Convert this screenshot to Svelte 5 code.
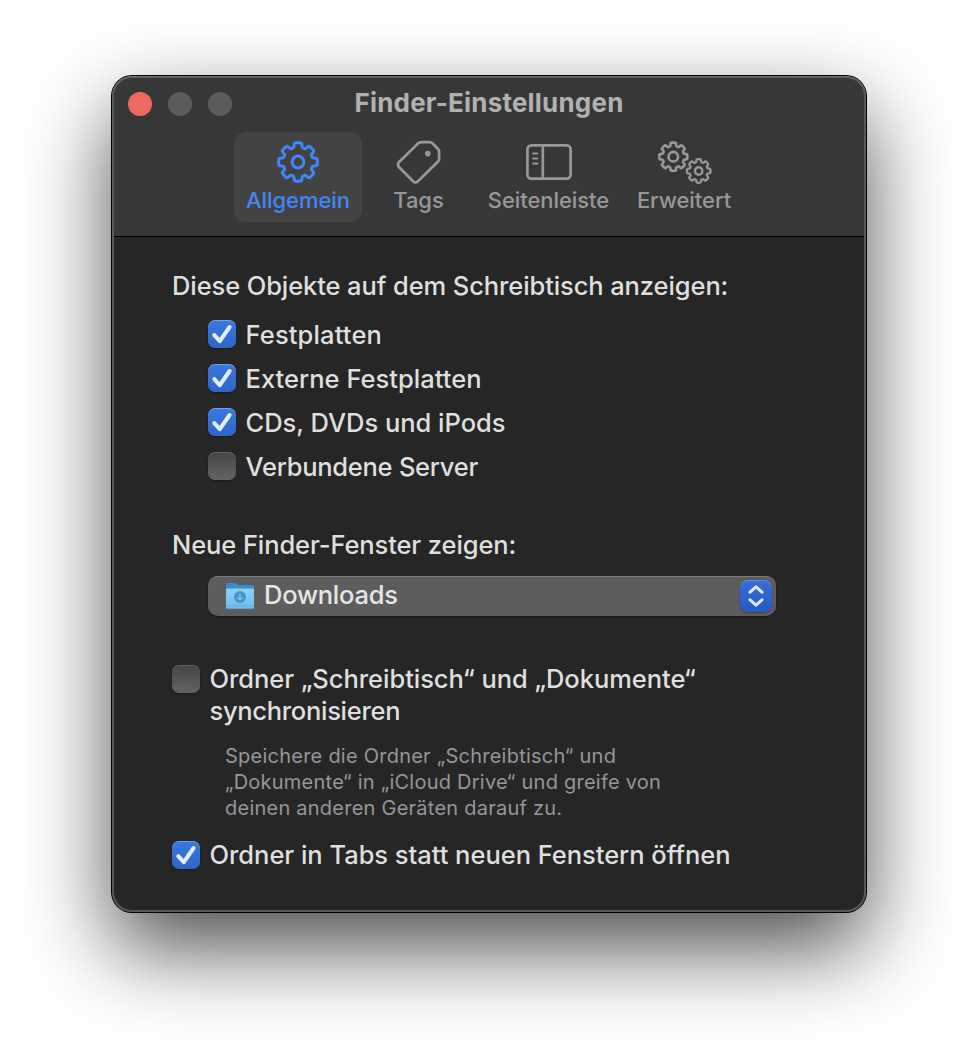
<script lang="ts">
  type Option = { label: string; checked: boolean; tracking: number };

  const tabs = [
    { id: 'general', label: 'Allgemein', width: 128 },
    { id: 'tags', label: 'Tags', width: 111 },
    { id: 'sidebar', label: 'Seitenleiste', width: 149 },
    { id: 'advanced', label: 'Erweitert', width: 122 }
  ];

  let activeTab = $state('general');

  let desktopItems: Option[] = $state([
    { label: 'Festplatten', checked: true, tracking: 0.15 },
    { label: 'Externe Festplatten', checked: true, tracking: 0.02 },
    { label: 'CDs, DVDs und iPods', checked: true, tracking: -0.02 },
    { label: 'Verbundene Server', checked: false, tracking: -0.26 }
  ]);

  let syncFolders = $state(false);
  let openInTabs = $state(true);

  // Closed outline of an eight-toothed gear, corners rounded with quadratic curves
  function gearPath(cx: number, cy: number, r: number): string {
    const inner = r * 0.76;
    const pts: [number, number][] = [];
    for (let i = 0; i < 8; i++) {
      const a = (i * Math.PI) / 4 - Math.PI / 2;
      for (const [rad, off] of [[inner, -0.27], [r, -0.19], [r, 0.19], [inner, 0.27]]) {
        pts.push([cx + rad * Math.cos(a + off), cy + rad * Math.sin(a + off)]);
      }
    }
    const n = pts.length;
    const mix = (p: number[], q: number[], t: number) =>
      `${(p[0] + (q[0] - p[0]) * t).toFixed(2)} ${(p[1] + (q[1] - p[1]) * t).toFixed(2)}`;
    let d = '';
    for (let i = 0; i < n; i++) {
      const prev = pts[(i + n - 1) % n];
      const cur = pts[i];
      const next = pts[(i + 1) % n];
      d += `${i ? 'L' : 'M'}${mix(cur, prev, 0.33)}Q${cur[0].toFixed(2)} ${cur[1].toFixed(2)} ${mix(cur, next, 0.33)}`;
    }
    return d + 'Z';
  }
</script>

{#snippet checkbox(checked: boolean, toggle: () => void, label: string)}
  <button class="checkbox" class:checked role="checkbox" aria-checked={checked} aria-label={label} onclick={toggle}>
    {#if checked}
      <svg viewBox="0 0 28 28" width="28" height="28">
        <path d="M6.3 15.2 L11.8 21.2 L21.6 7" />
      </svg>
    {/if}
  </button>
{/snippet}

<div class="desktop">
  <main class="window">
    <header>
      <div class="titlebar">
        <div class="lights">
          <span class="light close"></span>
          <span class="light"></span>
          <span class="light"></span>
        </div>
        <h1>Finder-Einstellungen</h1>
      </div>

      <nav class="toolbar">
        {#each tabs as tab (tab.id)}
          <button
            class="tab"
            class:active={activeTab === tab.id}
            style="width: {tab.width}px"
            onclick={() => (activeTab = tab.id)}
          >
            {#if tab.id === 'general'}
              <svg viewBox="0 0 46 46" width="46" height="46" stroke-width="3">
                <path d={gearPath(23, 23, 19.7)} />
                <circle cx="23" cy="23" r="5.9" />
              </svg>
            {:else if tab.id === 'tags'}
              <svg viewBox="0 0 46 46" width="46" height="46" stroke-width="2.7">
                <path d="M25.8 3.1H33.6Q35.2 3.1 36.6 4.5L41.6 9.5Q43.1 11 43.1 12.8V19.4Q43.1 21.4 41.5 23L22 42.2Q19.5 44.6 17 42.2L2.9 28Q0.9 25.4 3.1 23L21.8 4.6Q23.4 3.1 25.8 3.1Z" />
                <circle class="solid" cx="31.8" cy="14.6" r="2.8" />
              </svg>
            {:else if tab.id === 'sidebar'}
              <svg viewBox="0 0 46 46" width="46" height="46" stroke-width="2.7">
                <rect x="1.4" y="6.4" width="43.2" height="33.2" rx="4" />
                <path d="M16.8 6.4V39.6" />
                <path d="M7.2 14.4H11.4M7.2 19.4H11.4M7.2 24.4H11.4" stroke-width="2" />
              </svg>
            {:else}
              <svg viewBox="0 0 56 46" width="56" height="46" stroke-width="2.6">
                <path d={gearPath(17.3, 17.7, 14.3)} />
                <circle cx="17.3" cy="17.7" r="4.8" />
                <path d={gearPath(42.7, 32, 12)} stroke-width="2.3" />
                <circle cx="42.7" cy="32" r="3.7" stroke-width="2.4" />
              </svg>
            {/if}
            <span>{tab.label}</span>
          </button>
        {/each}
      </nav>
    </header>

    <section class="content">
      <h2>Diese Objekte auf dem Schreibtisch anzeigen:</h2>
      <div class="options">
        {#each desktopItems as item}
          <div class="option">
            {@render checkbox(item.checked, () => (item.checked = !item.checked), item.label)}
            <span style="letter-spacing: {item.tracking}px">{item.label}</span>
          </div>
        {/each}
      </div>

      <h2 class="second">Neue Finder-Fenster zeigen:</h2>
      <button class="popup">
        <svg class="folder" viewBox="0 0 30 28" width="30" height="28">
          <defs>
            <linearGradient id="folderFront" x1="0" y1="0" x2="0" y2="1">
              <stop offset="0" stop-color="#8ad2fb" />
              <stop offset="1" stop-color="#6fbcf0" />
            </linearGradient>
          </defs>
          <path d="M1 3Q1 1 3 1H9.5Q10.6 1 11.4 1.7L12.4 2.6Q13 3.1 14 3.1H27Q29 3.1 29 5V12H1Z" fill="#3a8cc9" />
          <path d="M1 7.8Q1 6.4 2.4 6.4H27.6Q29 6.4 29 7.8V25.4Q29 27 27.4 27H2.6Q1 27 1 25.4Z" fill="url(#folderFront)" />
          <path d="M1 23.6H29" stroke="#62abdd" stroke-width="0.8" />
          <path d="M1.8 26.6H28.2" stroke="#559fd4" stroke-width="0.8" />
          <circle cx="15" cy="15" r="6" fill="#4795cf" />
          <path d="M15 12V17.6M12.6 15.5L15 17.9L17.4 15.5" fill="none" stroke="#7cc5f3" stroke-width="1.3" />
        </svg>
        <span class="value">Downloads</span>
        <span class="stepper">
          <svg viewBox="0 0 32 32" width="32" height="32">
            <path d="M10 12.2L16 6.9L22 12.2M10 19.8L16 25.1L22 19.8" />
          </svg>
        </span>
      </button>

      <div class="option sync">
        {@render checkbox(syncFolders, () => (syncFolders = !syncFolders), 'Ordner synchronisieren')}
        <span>Ordner „Schreibtisch“ und „Dokumente“<br /><span class="tight">synchronisieren</span></span>
      </div>
      <p class="hint">
        Speichere die Ordner „Schreibtisch“ und<br />
        „Dokumente“ in „iCloud Drive“ und greife von<br />
        deinen anderen Geräten darauf zu.
      </p>
      <div class="option tabs-option">
        {@render checkbox(openInTabs, () => (openInTabs = !openInTabs), 'Ordner in Tabs öffnen')}
        <span>Ordner in Tabs statt neuen Fenstern öffnen</span>
      </div>
    </section>
  </main>
</div>

<style>
  :global(body) {
    margin: 0;
    background: #fff;
  }

  .desktop {
    box-sizing: border-box;
    width: 978px;
    height: 1060px;
    padding: 76px 112px 0;
    overflow: hidden;
    font-family: Inter, 'Liberation Sans', sans-serif;
  }

  .window {
    position: relative;
    display: flex;
    flex-direction: column;
    width: 754px;
    height: 836px;
    border-radius: 20px;
    background: #262626;
    color: #dfdfdf;
    box-shadow:
      0 0 0 1px #000,
      0 36px 86px rgba(0, 0, 0, 0.7);
  }

  /* light rim along the inside edge of the window */
  .window::after {
    content: '';
    position: absolute;
    inset: 0;
    border-radius: 20px;
    box-shadow:
      inset 0 1px 0 rgba(255, 255, 255, 0.16),
      inset 0 0 0 2px #58585a;
    pointer-events: none;
  }

  header {
    height: 160px;
    box-sizing: border-box;
    padding-top: 11px;
    border-radius: 20px 20px 0 0;
    border-bottom: 1px solid #000;
    background: #373737;
    flex: 0 0 161px;
  }

  .titlebar {
    display: grid;
    grid-template-columns: 1fr auto 1fr;
    height: 32px;
  }

  .lights {
    display: flex;
    gap: 16px;
    padding: 5px 0 0 16px;
  }

  .light {
    width: 24px;
    height: 24px;
    border-radius: 50%;
    background: #5b5b5b;
  }

  .light.close {
    background: #ed6a5e;
  }

  h1 {
    margin: 0;
    font-size: 26px;
    font-weight: 700;
    line-height: 32px;
    letter-spacing: 0.2px;
    color: #b1b1b1;
  }

  button {
    margin: 0;
    padding: 0;
    border: none;
    font-family: inherit;
    color: inherit;
  }

  .toolbar {
    display: flex;
    margin: 13px 0 0 122px;
  }

  .tab {
    display: flex;
    flex-direction: column;
    align-items: center;
    gap: 2px;
    height: 90px;
    padding-top: 7px;
    border-radius: 12px;
    background: transparent;
    color: #989898;
    font-size: 22px;
    font-weight: 500;
    line-height: 26px;
    letter-spacing: -0.07px;
    white-space: nowrap;
  }

  .tab:first-child {
    margin-right: 1px;
  }

  .tab.active {
    background: #434343;
    color: #3f87f7;
  }

  .tab svg {
    fill: none;
    stroke: currentColor;
    stroke-linejoin: round;
    stroke-linecap: round;
  }

  .tab .solid {
    fill: currentColor;
    stroke: none;
  }

  .content {
    padding: 33px 59px 0 60px;
    font-size: 25.5px;
    font-weight: 450;
    line-height: 32px;
    letter-spacing: -0.03px;
    white-space: nowrap;
  }

  h2 {
    margin: 0;
    font-size: inherit;
    font-weight: inherit;
    line-height: 32px;
    letter-spacing: -0.1px;
  }

  h2.second {
    margin-top: 46px;
  }

  .options {
    display: flex;
    flex-direction: column;
    gap: 12px;
    margin: 17px 0 0 36px;
  }

  .option {
    display: flex;
    align-items: flex-start;
    gap: 9.5px;
  }

  .checkbox {
    flex: none;
    width: 28px;
    height: 28px;
    margin-top: 1px;
    border-radius: 7px;
    background: linear-gradient(#454545, #636363);
    box-shadow:
      inset 0 1px 0 rgba(255, 255, 255, 0.16),
      0 1px 2px rgba(0, 0, 0, 0.35);
  }

  .checkbox.checked {
    background: linear-gradient(#3a78de, #2f66c6);
    box-shadow:
      inset 0 1px 0 rgba(255, 255, 255, 0.3),
      0 1px 2px rgba(0, 0, 0, 0.35);
  }

  .checkbox svg {
    display: block;
    fill: none;
    stroke: #e4edfb;
    stroke-width: 4;
    stroke-linecap: round;
    stroke-linejoin: round;
  }

  .popup {
    display: flex;
    align-items: center;
    width: 568px;
    height: 40px;
    margin: 15px 0 0 36px;
    padding: 0 4px 0 17px;
    border-radius: 10px;
    background: #5d5d5d;
    box-shadow:
      inset 0 1px 0 #7c7c7c,
      0 1px 2px rgba(0, 0, 0, 0.4);
    font-size: 25.5px;
    font-weight: 450;
    line-height: 32px;
    letter-spacing: -0.25px;
    color: #e6e6e6;
  }

  .value {
    margin-bottom: 2px;
  }

  .folder {
    margin-right: 9px;
  }

  .stepper {
    width: 32px;
    height: 32px;
    margin-left: auto;
    border-radius: 8px;
    background: linear-gradient(#386ddc, #2859c5);
    box-shadow:
      inset 0 1px 0 rgba(255, 255, 255, 0.2),
      0 1px 2px rgba(0, 0, 0, 0.35);
  }

  .stepper svg {
    display: block;
    fill: none;
    stroke: #e2eafa;
    stroke-width: 3;
    stroke-linecap: round;
    stroke-linejoin: round;
  }

  .sync {
    margin-top: 47px;
    letter-spacing: -0.04px;
  }

  .sync .tight {
    letter-spacing: -0.3px;
  }

  .sync .checkbox,
  .tabs-option .checkbox {
    margin-top: 2px;
  }

  .hint {
    margin: 16px 0 0 53px;
    font-size: 20px;
    font-weight: 400;
    line-height: 26px;
    letter-spacing: 0.24px;
    color: #96969a;
  }

  .tabs-option {
    margin-top: 18px;
  }
</style>
